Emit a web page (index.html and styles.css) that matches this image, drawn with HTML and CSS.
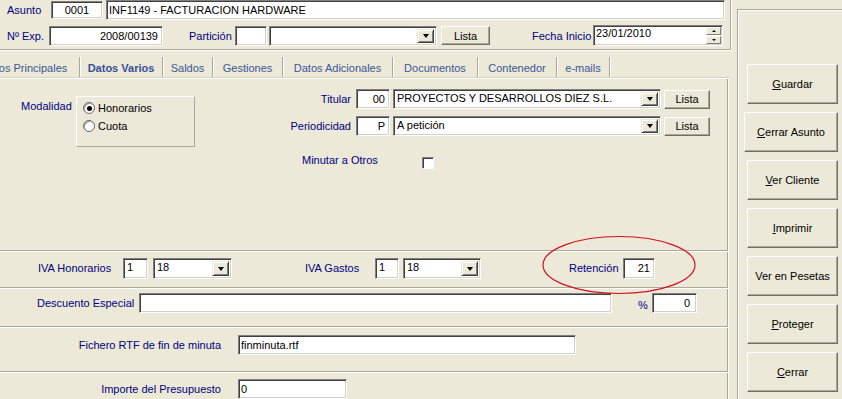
FILE: index.html
```html
<!DOCTYPE html>
<html lang="es">
<head>
    <meta charset="UTF-8">
    <meta name="viewport" content="width=device-width, initial-scale=1.0">
    <title>Asunto - Datos Varios</title>
    <link rel="stylesheet" href="styles.css">
</head>
<body>

<div class="ventana">
    <div class="principal">

        <div class="cabecera">
            <div class="fila fila-asunto">
                <span class="etiqueta et-asunto">Asunto</span>
                <div class="caja cod-asunto">0001</div>
                <div class="caja desc-asunto">INF1149 - FACTURACION HARDWARE</div>
            </div>
            <div class="fila fila-exp">
                <span class="etiqueta et-exp">Nº Exp.</span>
                <div class="caja num-exp">2008/00139</div>
                <span class="etiqueta et-particion">Partición</span>
                <div class="caja cod-particion"></div>
                <div class="caja combo combo-particion"><span class="combo-texto"></span><span class="combo-boton"></span></div>
                <button class="boton boton-lista">Lista</button>
                <span class="etiqueta et-fecha">Fecha Inicio</span>
                <div class="caja fecha">
                    <span class="fecha-texto">23/01/2010</span>
                    <span class="spin">
                        <span class="spin-btn arriba"></span>
                        <span class="spin-btn abajo"></span>
                    </span>
                </div>
            </div>
        </div>

        <div class="pestanas">
            <div class="pestana">Datos Principales</div>
            <div class="pestana activa">Datos Varios</div>
            <div class="pestana">Saldos</div>
            <div class="pestana">Gestiones</div>
            <div class="pestana">Datos Adicionales</div>
            <div class="pestana">Documentos</div>
            <div class="pestana">Contenedor</div>
            <div class="pestana">e-mails</div>
        </div>

        <div class="panel">
            <div class="bloque-superior">
                <div class="modalidad">
                    <span class="etiqueta et-modalidad">Modalidad</span>
                    <div class="grupo">
                        <div class="opcion"><span class="radio marcado"></span>Honorarios</div>
                        <div class="opcion"><span class="radio"></span>Cuota</div>
                    </div>
                </div>

                <div class="titular">
                    <div class="fila fila-titular">
                        <span class="etiqueta et-derecha">Titular</span>
                        <div class="caja cod-titular">00</div>
                        <div class="caja combo combo-titular"><span class="combo-texto">PROYECTOS Y DESARROLLOS DIEZ S.L.</span><span class="combo-boton"></span></div>
                        <button class="boton boton-lista2">Lista</button>
                    </div>
                    <div class="fila fila-periodicidad">
                        <span class="etiqueta et-derecha">Periodicidad</span>
                        <div class="caja cod-titular">P</div>
                        <div class="caja combo combo-titular"><span class="combo-texto">A petición</span><span class="combo-boton"></span></div>
                        <button class="boton boton-lista2">Lista</button>
                    </div>
                    <div class="fila fila-minutar">
                        <span class="etiqueta et-minutar">Minutar a Otros</span>
                        <span class="check"></span>
                    </div>
                </div>
            </div>

            <div class="separador"></div>

            <div class="fila fila-iva">
                <span class="etiqueta et-iva-hon">IVA Honorarios</span>
                <div class="caja cod-iva">1</div>
                <div class="caja combo combo-iva"><span class="combo-texto">18</span><span class="combo-boton"></span></div>
                <span class="etiqueta et-iva-gas">IVA Gastos</span>
                <div class="caja cod-iva2">1</div>
                <div class="caja combo combo-iva2"><span class="combo-texto">18</span><span class="combo-boton"></span></div>
                <span class="etiqueta et-retencion">Retención</span>
                <div class="caja retencion">21</div>
            </div>

            <div class="separador"></div>

            <div class="fila fila-descuento">
                <span class="etiqueta et-descuento">Descuento Especial</span>
                <div class="caja descuento"></div>
                <span class="etiqueta et-porcentaje">%</span>
                <div class="caja porcentaje">0</div>
            </div>

            <div class="separador"></div>

            <div class="fila fila-fichero">
                <span class="etiqueta et-larga">Fichero RTF de fin de minuta</span>
                <div class="caja fichero">finminuta.rtf</div>
            </div>

            <div class="separador"></div>

            <div class="fila fila-importe">
                <span class="etiqueta et-larga">Importe del Presupuesto</span>
                <div class="caja importe">0</div>
            </div>
        </div>
    </div>

    <div class="acciones">
        <button class="boton accion"><u>G</u>uardar</button>
        <button class="boton accion ancha"><u>C</u>errar Asunto</button>
        <button class="boton accion"><u>V</u>er Cliente</button>
        <button class="boton accion"><u>I</u>mprimir</button>
        <button class="boton accion">Ver en Pesetas</button>
        <button class="boton accion"><u>P</u>roteger</button>
        <button class="boton accion"><u>C</u>errar</button>
    </div>

    <svg class="marca" width="160" height="64" viewBox="0 0 160 64">
        <ellipse cx="79" cy="31" rx="76" ry="28.5" fill="none" stroke="#d0101c" stroke-width="1.2"/>
    </svg>
</div>

</body>
</html>
```

FILE: styles.css
```css
* {
    box-sizing: border-box;
}

body {
    margin: 0;
    background-color: #ece9d8;
    font-family: "Liberation Sans", Arial, sans-serif;
    font-size: 11px;
    color: #000080;
    width: 842px;
    height: 399px;
    overflow: hidden;
}

.ventana {
    display: flex;
    height: 399px;
    position: relative;
}

.principal {
    width: 732px;
    display: flex;
    flex-direction: column;
}

/* cabecera del asunto */
.cabecera {
    height: 52px;
    border-right: 1px solid #fff;
    border-bottom: 1px solid #fff;
    box-shadow: inset -1px -1px 0 #aca899;
}

.fila {
    display: flex;
    align-items: flex-start;
}

.etiqueta {
    white-space: nowrap;
}

.caja {
    background-color: #fff;
    color: #000;
    border: 1px solid;
    border-color: #808080 #fff #fff #808080;
    box-shadow: inset 1px 1px 0 #404040, inset -1px -1px 0 #d4d0c8;
    padding: 0 3px;
    white-space: nowrap;
    overflow: hidden;
}

.fila-asunto {
    height: 20px;
    align-items: center;
}

.et-asunto {
    margin-left: 7px;
    width: 44px;
}

.cod-asunto {
    width: 52px;
    height: 18px;
    line-height: 16px;
    text-align: center;
}

.desc-asunto {
    margin-left: 3px;
    width: 619px;
    height: 20px;
    line-height: 18px;
    padding-left: 2px;
}

.fila-exp {
    margin-top: 5px;
    height: 21px;
    align-items: center;
}

.et-exp {
    margin-left: 7px;
    width: 42px;
}

.num-exp {
    width: 114px;
    height: 20px;
    line-height: 18px;
    text-align: right;
    padding-right: 4px;
}

.et-particion {
    margin-left: 26px;
    width: 46px;
}

.cod-particion {
    width: 32px;
    height: 20px;
}

.combo {
    display: flex;
    padding: 2px 2px 2px 3px;
}

.combo-texto {
    flex: 1;
    line-height: 13px;
    overflow: hidden;
}

.combo-boton {
    width: 17px;
    background-color: #ece9d8;
    border: 1px solid;
    border-color: #ece9d8 #404040 #404040 #ece9d8;
    box-shadow: inset 1px 1px 0 #fff, inset -1px -1px 0 #808080;
    display: flex;
    align-items: center;
    justify-content: center;
}

.combo-boton::after {
    content: "";
    border-left: 3.5px solid transparent;
    border-right: 3.5px solid transparent;
    border-top: 4px solid #000;
}

.combo-particion {
    margin-left: 2px;
    width: 168px;
    height: 20px;
}

.boton {
    font-family: "Liberation Sans", Arial, sans-serif;
    font-size: 11px;
    color: #000;
    background-color: #ece9d8;
    border: 1px solid;
    border-color: #fff #716f64 #716f64 #fff;
    box-shadow: inset -1px -1px 0 #aca899;
    padding: 0;
}

.boton-lista {
    margin-left: 4px;
    width: 49px;
    height: 19px;
}

.et-fecha {
    margin-left: 42px;
    width: 61px;
}

.fecha {
    width: 130px;
    height: 21px;
    display: flex;
    padding: 1px 1px 1px 2px;
}

.fecha-texto {
    flex: 1;
    line-height: 13px;
}

.spin {
    width: 15px;
    display: flex;
    flex-direction: column;
    gap: 1px;
}

.spin-btn {
    flex: 1;
    background-color: #ece9d8;
    border: 1px solid;
    border-color: #fff #808080 #808080 #fff;
    display: flex;
    align-items: center;
    justify-content: center;
}

.spin-btn::after {
    content: "";
    border-left: 2px solid transparent;
    border-right: 2px solid transparent;
}

.arriba::after {
    border-bottom: 2px solid #000;
}

.abajo::after {
    border-top: 2px solid #000;
}

/* pestañas */
.pestanas {
    display: grid;
    grid-template-columns: 110px 83px 50px 70px 110px 85px 79px 53px;
    margin-top: 6px;
    margin-left: -30px;
    height: 21px;
    width: max-content;
}

.pestana {
    display: flex;
    align-items: center;
    justify-content: center;
    color: #3a5796;
    border-right: 1px solid #aca899;
    box-shadow: 1px 0 0 #fff;
    white-space: nowrap;
}

.pestana.activa {
    font-weight: bold;
    color: #34509a;
}

/* panel de la pestaña */
.panel {
    width: 729px;
    flex: 1;
    border-top: 1px solid #fff;
    border-right: 1px solid #fff;
    box-shadow: inset -1px 0 0 #aca899, 0 -1px 0 #d8d4c4;
    display: flex;
    flex-direction: column;
}

.bloque-superior {
    height: 171px;
    display: flex;
}

.modalidad {
    width: 290px;
    display: flex;
    align-items: flex-start;
    padding: 17px 0 0 21px;
}

.et-modalidad {
    width: 55px;
    margin-top: 4px;
}

.grupo {
    width: 119px;
    height: 51px;
    border: 1px solid;
    border-color: #fff #aca899 #aca899 #fff;
    padding: 2px 0 0 6px;
    color: #000;
}

.opcion {
    height: 18px;
    display: flex;
    align-items: center;
    gap: 3px;
}

.radio {
    width: 12px;
    height: 12px;
    border-radius: 50%;
    background-color: #fff;
    border: 1px solid #6b6b6b;
    box-shadow: inset 1px 1px 0 #a0a0a0;
    display: flex;
    align-items: center;
    justify-content: center;
}

.radio.marcado::after {
    content: "";
    width: 5px;
    height: 5px;
    border-radius: 50%;
    background-color: #000;
}

.titular {
    padding-top: 10px;
}

.fila-titular,
.fila-periodicidad {
    height: 20px;
    align-items: center;
}

.fila-periodicidad {
    margin-top: 7px;
}

.et-derecha {
    width: 61px;
    text-align: right;
    margin-right: 5px;
}

.cod-titular {
    width: 34px;
    height: 20px;
    line-height: 18px;
    text-align: right;
    padding-right: 4px;
}

.combo-titular {
    margin-left: 3px;
    width: 268px;
    height: 20px;
}

.boton-lista2 {
    margin-left: 3px;
    width: 46px;
    height: 19px;
}

.fila-minutar {
    margin-top: 18px;
}

.et-minutar {
    margin-left: 12px;
    width: 120px;
    line-height: 13px;
}

.check {
    margin-top: 3px;
    width: 12px;
    height: 12px;
    background-color: #fff;
    border: 1px solid;
    border-color: #808080 #fff #fff #808080;
    box-shadow: inset 1px 1px 0 #404040;
}

.separador {
    height: 2px;
    border-top: 1px solid #aca899;
    border-bottom: 1px solid #fff;
}

/* fila del IVA */
.fila-iva {
    height: 35px;
    padding: 6px 0 0 38px;
}

.fila-iva .etiqueta {
    line-height: 21px;
}

.et-iva-hon {
    width: 85px;
}

.cod-iva {
    width: 25px;
    height: 21px;
    line-height: 17px;
}

.combo-iva {
    margin-left: 5px;
    width: 79px;
    height: 21px;
}

.et-iva-gas {
    margin-left: 73px;
    width: 70px;
}

.cod-iva2 {
    width: 24px;
    height: 21px;
    line-height: 17px;
}

.combo-iva2 {
    margin-left: 4px;
    width: 78px;
    height: 21px;
}

.et-retencion {
    margin-left: 88px;
    width: 54px;
}

.retencion {
    width: 32px;
    height: 21px;
    line-height: 19px;
    text-align: right;
    padding-right: 4px;
}

/* descuento */
.fila-descuento {
    height: 37px;
    padding: 4px 0 0 37px;
}

.fila-descuento .etiqueta {
    line-height: 20px;
}

.et-descuento {
    width: 102px;
}

.descuento {
    width: 473px;
    height: 20px;
}

.et-porcentaje {
    margin-left: 26px;
    width: 14px;
    padding-top: 2px;
}

.porcentaje {
    width: 45px;
    height: 20px;
    line-height: 18px;
    text-align: right;
    padding-right: 6px;
}

/* fichero e importe */
.fila-fichero {
    height: 43px;
    padding-top: 7px;
}

.fila-importe {
    padding-top: 6px;
}

.et-larga {
    width: 221px;
    text-align: right;
    margin-right: 17px;
    line-height: 20px;
}

.fichero {
    width: 338px;
    height: 20px;
    line-height: 18px;
    padding-left: 2px;
}

.importe {
    width: 109px;
    height: 20px;
    line-height: 18px;
    padding-left: 2px;
}

/* botones de la derecha */
.acciones {
    margin-left: 5px;
    margin-top: 9px;
    width: 105px;
    border-left: 1px solid #aca899;
    border-top: 1px solid #aca899;
    box-shadow: inset 1px 1px 0 #fff;
    display: flex;
    flex-direction: column;
    align-items: flex-end;
    gap: 8px;
    padding: 54px 4px 0 0;
}

.accion {
    width: 91px;
    height: 40px;
    flex-shrink: 0;
}

.accion.ancha {
    width: 94px;
}

.marca {
    position: absolute;
    left: 540px;
    top: 234px;
    pointer-events: none;
}
```
